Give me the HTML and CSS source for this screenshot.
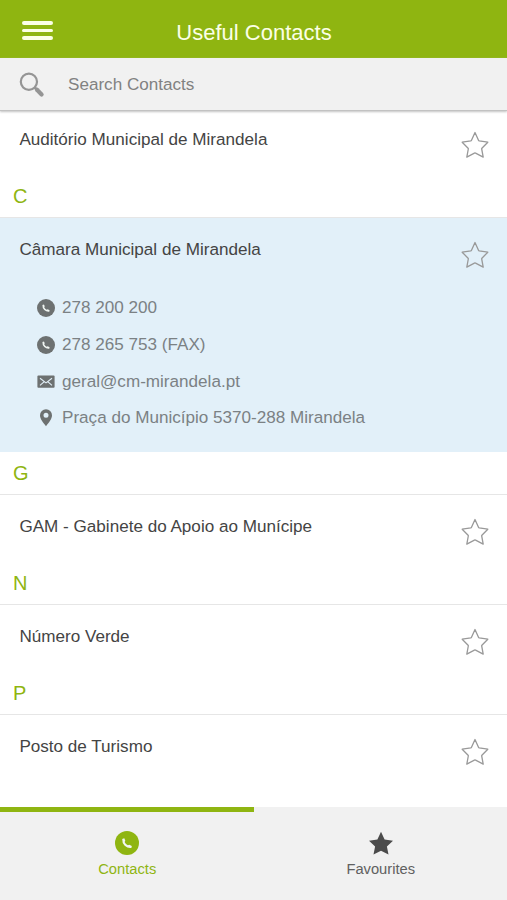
FILE: index.html
```html
<!DOCTYPE html>
<html lang="en">
<head>
<meta charset="utf-8">
<title>Useful Contacts</title>
<link rel="stylesheet" href="styles.css">
</head>
<body>
<svg class="defs" aria-hidden="true">
  <symbol id="star" viewBox="0 0 28 28"><path d="M14 1.5 L17.6 9.4 Q17.8 9.8 18.2 9.9 L26.8 11.2 L20.9 17.2 Q20.6 17.5 20.7 18 L22.2 26.1 L14.6 22.1 Q14 21.8 13.4 22.1 L5.8 26.1 L7.3 18 Q7.4 17.5 7.1 17.2 L1.2 11.2 L9.8 9.9 Q10.2 9.8 10.4 9.4 Z" stroke-linejoin="round"/></symbol>
  <symbol id="solid-star" viewBox="0 0 24 24"><path fill="currentColor" d="M12 .8 L15.6 8.5 L24 9.7 L17.9 15.5 L19.5 23.5 L12 19.7 L4.5 23.5 L6.1 15.5 L0 9.7 L8.4 8.5 Z"/></symbol>
  <symbol id="phone" viewBox="0 0 24 24"><circle cx="12" cy="12" r="12" fill="currentColor"/><path class="knock" d="M7.2 8 L9.3 7.2 L10.3 9.8 L9.6 11 Q10.7 13.4 12.9 14.3 L14.3 13.8 L16.8 15.1 L16.4 17 Q12.8 17.6 9.7 14.8 Q6.9 11.8 7.2 8 Z"/></symbol>
</svg>
<div class="app">
  <header class="topbar">
    <button class="menu" aria-label="Menu"><span></span><span></span><span></span></button>
    <h1>Useful Contacts</h1>
  </header>
  <div class="search">
    <svg class="glass" viewBox="0 0 26 26"><circle cx="9.9" cy="9.7" r="8.1" stroke-width="2.2"/><path d="M15.7 15.5 L18 17.8" stroke-width="2.6"/><path d="M18 17.8 L22.6 22.4" stroke-width="4.2" stroke-linecap="round"/></svg>
    <span>Search Contacts</span>
  </div>
  <main class="list">
    <article class="item first"><h3>Auditório Municipal de Mirandela</h3><svg class="star"><use href="#star"/></svg></article>
    <h2>C</h2>
    <article class="item open">
      <h3>Câmara Municipal de Mirandela</h3><svg class="star"><use href="#star"/></svg>
      <ul class="details">
        <li><svg class="icon"><use href="#phone"/></svg>278 200 200</li>
        <li><svg class="icon"><use href="#phone"/></svg>278 265 753 (FAX)</li>
        <li><svg class="icon" viewBox="0 0 18 18"><rect x="0.4" y="2.4" width="17.2" height="12.4" rx="1" fill="currentColor"/><path class="lines" d="M3 5.2 L9 9.9 L15 5.2 M3 12.4 L7 8.9 M15 12.4 L11 8.9"/></svg>geral@cm-mirandela.pt</li>
        <li><svg class="icon" viewBox="0 0 18 18"><path fill="currentColor" fill-rule="evenodd" d="M9 .3 A6 6 0 0 0 3 6.3 C3 10 6.2 13.8 9 17.2 C11.8 13.8 15 10 15 6.3 A6 6 0 0 0 9 .3 Z M9 3.7 A2.5 2.5 0 1 1 9 8.7 A2.5 2.5 0 1 1 9 3.7 Z"/></svg>Praça do Município 5370-288 Mirandela</li>
      </ul>
    </article>
    <h2>G</h2>
    <article class="item"><h3>GAM - Gabinete do Apoio ao Munícipe</h3><svg class="star"><use href="#star"/></svg></article>
    <h2>N</h2>
    <article class="item"><h3>Número Verde</h3><svg class="star"><use href="#star"/></svg></article>
    <h2>P</h2>
    <article class="item"><h3>Posto de Turismo</h3><svg class="star"><use href="#star"/></svg></article>
  </main>
  <nav class="tabs">
    <a class="tab active"><svg class="tab-icon"><use href="#phone"/></svg>Contacts</a>
    <a class="tab"><svg class="tab-icon solid"><use href="#solid-star"/></svg>Favourites</a>
  </nav>
</div>
</body>
</html>
```
FILE: styles.css
```css
* { box-sizing: border-box; }
body { margin: 0; background: #fff; font-family: "Liberation Sans", Arial, sans-serif; color: #444; }
h1, h2, h3, ul { margin: 0; padding: 0; font-weight: 400; }
svg { display: block; flex: none; }
.defs { position: absolute; width: 0; height: 0; }
.app { height: 900px; display: flex; flex-direction: column; overflow: hidden; }

.topbar { height: 58px; flex: none; background: #8fb511; color: #fbffe6; display: grid; grid-template-columns: 74px 1fr 74px; align-items: center; }
.topbar h1 { font-size: 22px; line-height: 26px; text-align: center; padding: 7px 0 0 1px; }
.menu { display: flex; flex-direction: column; gap: 4px; width: 31px; margin: 3px 0 0 21.5px; padding: 0; border: 0; background: none; }
.menu span { height: 3.5px; border-radius: 2px; background: #fbffe6; }

.search { height: 53px; flex: none; display: flex; align-items: center; background: #f1f1f1; border-bottom: 1px solid #c2c2c2; box-shadow: 0 1px 2px #c4c4c4; padding: 1px 0 0 19px; color: #818181; font-size: 17.1px; }
.glass { width: 26px; height: 26px; margin-right: 23px; fill: none; stroke: #959595; }

.list { flex: 1; min-height: 0; }
.list h2 { height: 44px; padding-left: 13px; font-size: 20px; line-height: 44px; color: #8fb511; border-bottom: 1px solid #e6e6e6; }
.item { height: 66px; display: grid; grid-template-columns: 1fr 28px; align-content: start; padding: 22px 18px 0 19.4px; }
.first { height: 63px; padding-top: 19px; }
.item h3 { font-size: 17.1px; line-height: 20px; }
.star { width: 28px; height: 28px; margin-top: 1px; fill: none; stroke: #999; stroke-width: 1.3; }
.open { height: 234px; background: #e2f0f9; }
.open + h2 { height: 43px; line-height: 43px; }
.details { grid-column: 1 / -1; list-style: none; padding: 21px 0 0 17.6px; color: #7b8184; font-size: 17.1px; }
.details li { height: 36.7px; display: flex; align-items: center; gap: 7px; }
.icon { width: 18px; height: 18px; color: #6d7171; }
.knock { fill: #f1f6f2; }
.lines { fill: none; stroke: #e2f0f9; stroke-width: 1.1; }

.tabs { height: 93px; flex: none; display: grid; grid-template-columns: 1fr 1fr; background: #f1f1f1; }
.tab { display: flex; flex-direction: column; align-items: center; border-top: 5px solid transparent; padding: 19px 0 0 1px; gap: 6px; font-size: 14.7px; line-height: 17px; color: #606060; }
.active { border-color: #8fb511; color: #8fb511; }
.tab-icon { width: 24px; height: 24px; }
.solid { color: #4b4b4b; }
```
